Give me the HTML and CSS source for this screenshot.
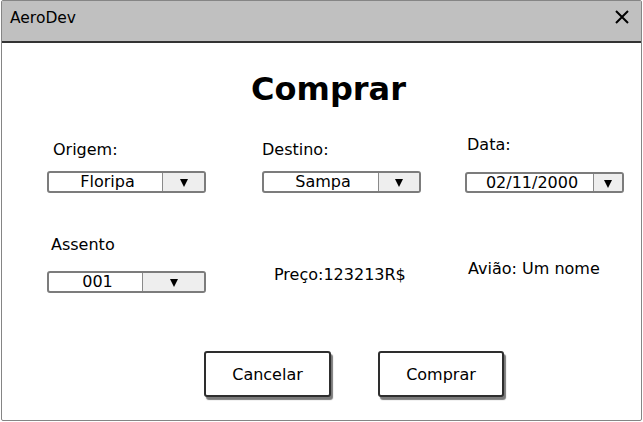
FILE: index.html
```html
<!DOCTYPE html>
<html lang="pt">
<head>
<meta charset="utf-8">
<title>AeroDev</title>
<link rel="stylesheet" href="styles.css">
</head>
<body>
<div class="window">
  <div class="titlebar">
    <span class="title">AeroDev</span>
    <svg class="close" width="14" height="14" viewBox="0 0 14 14"><path d="M1 1 L13 13 M13 1 L1 13" stroke="#000" stroke-width="2" fill="none"/></svg>
  </div>
  <div class="content">
    <h1 class="heading">Comprar</h1>
    <div class="row row-top">
      <div class="field">
        <label class="label label-origem">Origem:</label>
        <div class="select">
          <span class="value v-origem">Floripa</span>
          <span class="arrow a-origem"><svg width="8" height="8" viewBox="0 0 8 8"><polygon points="0,0 8,0 4,8" fill="#000"/></svg></span>
        </div>
      </div>
      <div class="field">
        <label class="label label-destino">Destino:</label>
        <div class="select">
          <span class="value v-destino">Sampa</span>
          <span class="arrow a-destino"><svg width="8" height="8" viewBox="0 0 8 8"><polygon points="0,0 8,0 4,8" fill="#000"/></svg></span>
        </div>
      </div>
      <div class="field">
        <label class="label label-data">Data:</label>
        <div class="select select-data">
          <span class="value v-data">02/11/2000</span>
          <span class="arrow a-data"><svg width="8" height="8" viewBox="0 0 8 8"><polygon points="0,0 8,0 4,8" fill="#000"/></svg></span>
        </div>
      </div>
    </div>
    <div class="row row-bottom">
      <div class="field">
        <label class="label label-assento">Assento</label>
        <div class="select">
          <span class="value v-assento">001</span>
          <span class="arrow a-assento"><svg width="8" height="8" viewBox="0 0 8 8"><polygon points="0,0 8,0 4,8" fill="#000"/></svg></span>
        </div>
      </div>
      <div class="info info-preco">Preço:123213R$</div>
      <div class="info info-aviao">Avião: Um nome</div>
    </div>
    <div class="buttons">
      <button class="btn btn-cancel">Cancelar</button>
      <button class="btn btn-buy">Comprar</button>
    </div>
  </div>
</div>
</body>
</html>
```
FILE: styles.css
```css
* { box-sizing: border-box; }
html, body { margin: 0; padding: 0; background: #fff; }
body {
  font-family: "DejaVu Sans", sans-serif;
  font-size: 16px;
  color: #000;
}
.window {
  margin-left: 1px;
  width: 641px;
  height: 421px;
  border: 1px solid #858585;
  border-radius: 2px;
  display: flex;
  flex-direction: column;
}
.titlebar {
  height: 42px;
  background: #c0c0c0;
  border-bottom: 2px solid #333;
  display: flex;
  align-items: flex-start;
  justify-content: space-between;
  padding: 8px 12px 0 8px;
}
.title { font-size: 15.5px; line-height: 19px; }
.close { margin-top: 1px; }
.content { flex: 1; }
.heading {
  margin: 28px 0 0 0;
  padding-left: 14px;
  text-align: center;
  font-size: 32px;
  font-weight: bold;
  line-height: 37px;
}
.row {
  display: grid;
  grid-template-columns: 215px 203px 159px;
  padding-left: 45px;
}
.row-top { margin-top: 27px; align-items: end; }
.row-bottom { margin-top: 42px; align-items: start; }
.field { display: flex; flex-direction: column; width: 159px; }
.label { line-height: 19px; display: block; }
.label-origem { margin-left: 6px; margin-bottom: 12px; }
.label-destino { margin-left: 0; margin-bottom: 12px; }
.label-data { margin-left: 2px; margin-bottom: 18px; }
.label-assento { margin-left: 4px; margin-bottom: 17px; }
.select {
  height: 22px;
  border: 2px solid #7c7c7c;
  border-radius: 3px;
  display: flex;
  overflow: hidden;
  background: #fff;
}
.select-data { height: 21px; }
.value {
  text-align: center;
  line-height: 18px;
  padding-left: 4px;
  border-right: 1px solid #8a8a8a;
}
.select-data .value { line-height: 17px; }
.arrow {
  flex: 1;
  background: #eeeeee;
  display: flex;
  align-items: center;
  justify-content: center;
  padding-top: 2px;
}
.v-origem { width: 114px; }
.v-destino { width: 115px; }
.v-data { width: 127px; }
.v-assento { width: 94px; }
.info { line-height: 19px; }
.info-preco { margin: 30px 0 0 12px; }
.info-aviao { margin: 24px 0 0 3px; }
.buttons {
  display: flex;
  gap: 47px;
  padding-left: 202px;
  margin-top: 58px;
}
.btn {
  font-family: "DejaVu Sans", sans-serif;
  font-size: 16px;
  color: #000;
  height: 46px;
  background: #fff;
  border: 2px solid #2e2e2e;
  border-radius: 3px;
  box-shadow: 2px 3px 1px #7a7a7a;
  padding: 0;
}
.btn-cancel { width: 127px; }
.btn-buy { width: 126px; }
```
